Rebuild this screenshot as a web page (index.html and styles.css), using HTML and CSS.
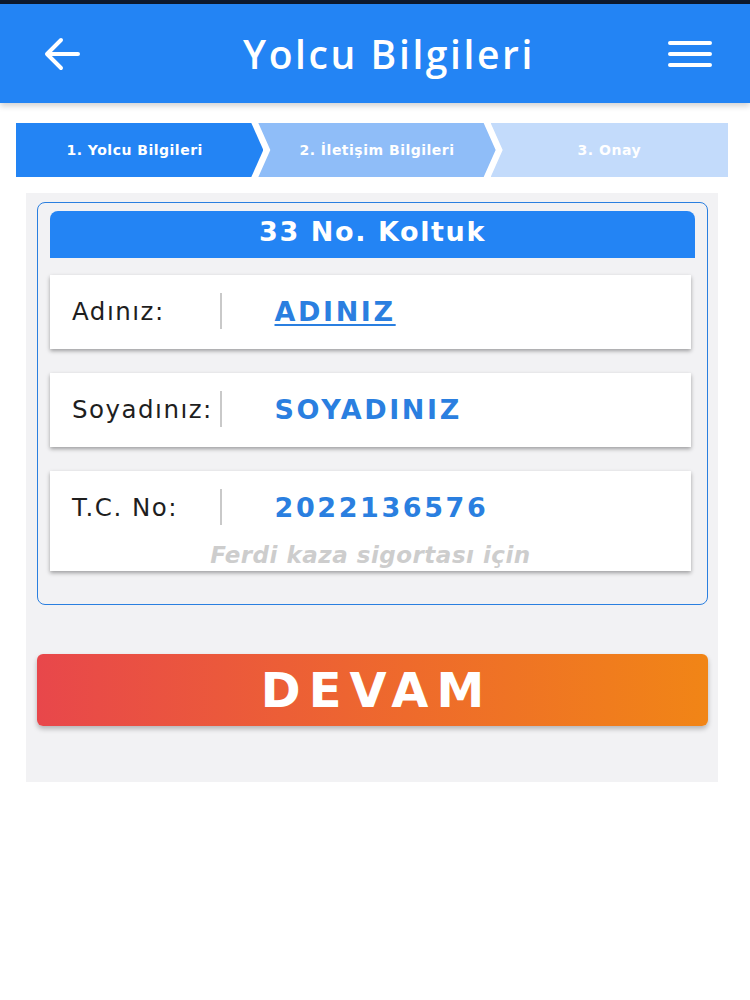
FILE: index.html
```html
<!DOCTYPE html>
<html lang="tr">
<head>
    <meta charset="UTF-8">
    <meta name="viewport" content="width=device-width, initial-scale=1.0">
    <title>Yolcu Bilgileri</title>
    <link rel="stylesheet" href="styles.css">
</head>
<body>

    <div class="status-strip"></div>
    <header class="topbar">
        <svg class="icon back" viewBox="0 0 40 40" width="40" height="40">
            <path d="M36 20H6M19 6L5 20l14 14" fill="none" stroke="#fff" stroke-width="4" stroke-linecap="round" stroke-linejoin="round"/>
        </svg>
        <h1>Yolcu Bilgileri</h1>
        <svg class="icon menu" viewBox="0 0 44 28" width="44" height="28">
            <path d="M2 3h40M2 14h40M2 25h40" fill="none" stroke="#fff" stroke-width="4" stroke-linecap="round"/>
        </svg>
    </header>

    <div class="steps">
        <div class="step step-1">1. Yolcu Bilgileri</div>
        <div class="step step-2">2. İletişim Bilgileri</div>
        <div class="step step-3">3. Onay</div>
    </div>

    <div class="panel">
        <div class="card">
            <div class="card-title">33 No. Koltuk</div>

            <div class="field">
                <div class="field-line">
                    <span class="label">Adınız:</span>
                    <span class="divider"></span>
                    <span class="value underlined">ADINIZ</span>
                </div>
            </div>

            <div class="field">
                <div class="field-line">
                    <span class="label">Soyadınız:</span>
                    <span class="divider"></span>
                    <span class="value">SOYADINIZ</span>
                </div>
            </div>

            <div class="field tall">
                <div class="field-line">
                    <span class="label">T.C. No:</span>
                    <span class="divider"></span>
                    <span class="value">2022136576</span>
                </div>
                <div class="hint">Ferdi kaza sigortası için</div>
            </div>
        </div>

        <button class="continue">DEVAM</button>
    </div>

</body>
</html>
```

FILE: styles.css
```css
* {
    margin: 0;
    padding: 0;
    box-sizing: border-box;
}
body {
    font-family: 'DejaVu Sans', 'Noto Sans', sans-serif;
    background: #fff;
    width: 750px;
    height: 1000px;
    overflow: hidden;
}
.status-strip {
    height: 4px;
    background: #0d1a2e;
}
.topbar {
    height: 99px;
    background: #2384f4;
    display: flex;
    align-items: center;
    justify-content: space-between;
    padding: 0 38px 0 42px;
    box-shadow: 0 3px 6px rgba(0, 0, 0, 0.18);
    position: relative;
}
.topbar h1 {
    font-family: 'Open Sans', sans-serif;
    font-weight: 600;
    font-size: 39px;
    color: #fff;
    letter-spacing: 2.6px;
    margin-left: 28px;
}
.icon { display: block; }

.steps {
    display: flex;
    height: 54px;
    margin: 20px 22px 0 16px;
}
.step {
    flex: 1;
    display: flex;
    align-items: center;
    justify-content: center;
    color: #fff;
    font-weight: 700;
    font-size: 14px;
    letter-spacing: 0.5px;
}
.step-1 {
    background: #2384f4;
    clip-path: polygon(0 0, calc(100% - 12px) 0, 100% 50%, calc(100% - 12px) 100%, 0 100%);
    padding-right: 10px;
}
.step-2 {
    background: #8fbdf8;
    margin-left: -5px;
    clip-path: polygon(0 0, calc(100% - 12px) 0, 100% 50%, calc(100% - 12px) 100%, 0 100%, 12px 50%);
}
.step-3 {
    background: #c3dbfb;
    margin-left: -5px;
    clip-path: polygon(0 0, 100% 0, 100% 100%, 0 100%, 12px 50%);
}

.panel {
    background: #f2f2f4;
    width: 692px;
    margin: 16px 0 0 26px;
    padding: 9px 10px 56px 11px;
}
.card {
    border: 1.5px solid #2a7fe0;
    border-radius: 8px;
    padding: 8px 12px 33px 12px;
}
.card-title {
    background: #2384f4;
    color: #fff;
    font-weight: 700;
    font-size: 27px;
    text-align: center;
    height: 47px;
    line-height: 42px;
    border-radius: 8px 8px 0 0;
    letter-spacing: 1.6px;
    margin-bottom: 17px;
}
.field {
    background: #fff;
    height: 74px;
    margin-right: 4px;
    box-shadow: 0 2px 4px rgba(0, 0, 0, 0.35);
    margin-bottom: 24px;
    padding-top: 18px;
}
.field.tall {
    height: 100px;
    margin-bottom: 0;
}
.field-line {
    display: flex;
    align-items: center;
    height: 36px;
}
.label {
    width: 170px;
    padding-left: 22px;
    font-size: 24.5px;
    color: #1e1e1e;
    letter-spacing: 1.5px;
    white-space: nowrap;
}
.divider {
    width: 1.5px;
    height: 36px;
    background: #c9c9c9;
}
.value {
    margin-left: 53px;
    color: #2a7fe0;
    font-weight: 700;
    font-size: 27px;
    letter-spacing: 2.6px;
}
.underlined {
    text-decoration: underline;
    text-decoration-thickness: 2px;
    text-underline-offset: 3px;
}
.hint {
    text-align: center;
    color: #cdcdcd;
    font-style: italic;
    font-weight: 700;
    font-size: 23px;
    margin-top: 17px;
    letter-spacing: 0.5px;
}

.continue {
    display: block;
    width: 671px;
    height: 72px;
    margin-top: 49px;
    border: none;
    border-radius: 6px;
    background: linear-gradient(90deg, #e8474b, #ee6a2c 55%, #f18516);
    color: #fff;
    font-family: 'DejaVu Sans', sans-serif;
    font-weight: 700;
    font-size: 48px;
    letter-spacing: 8px;
    text-indent: 8px;
    box-shadow: 0 3px 5px rgba(0, 0, 0, 0.25);
}
```
